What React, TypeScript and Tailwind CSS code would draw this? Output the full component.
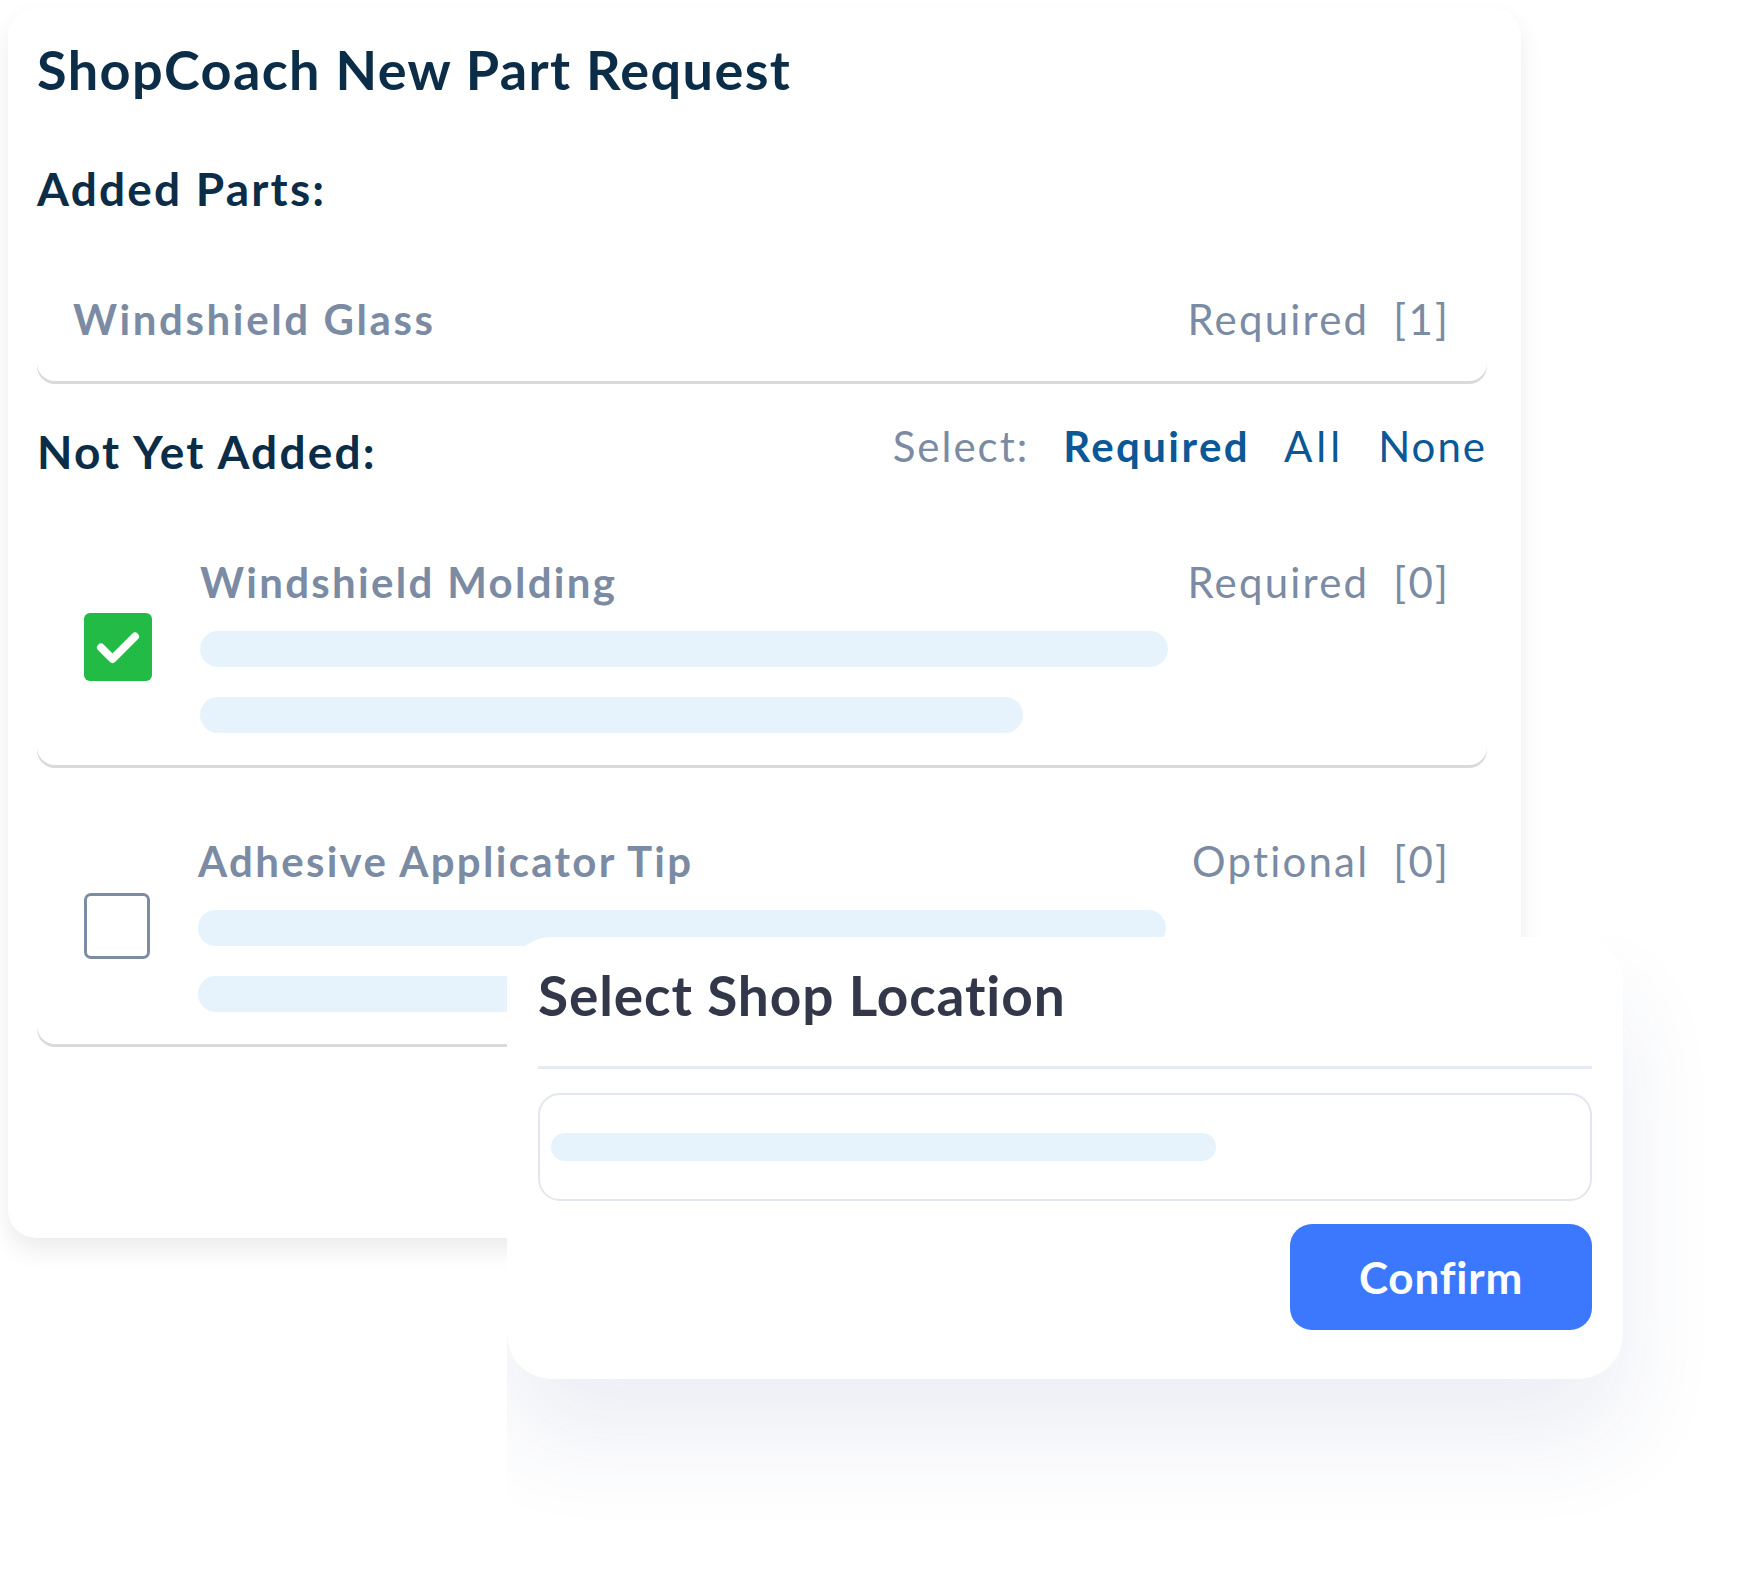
function CheckedBox() {
  return (
    <span className="flex h-[68px] w-[68px] shrink-0 items-center justify-center rounded-[6px] bg-[#22bb46]">
      <svg width="68" height="68" viewBox="0 0 68 68" fill="none">
        <path
          d="M17 34.5 L28.5 46 L51 23.5"
          stroke="white"
          strokeWidth="8"
          strokeLinecap="round"
          strokeLinejoin="round"
        />
      </svg>
    </span>
  );
}

function EmptyBox() {
  return (
    <span className="block h-[66px] w-[66px] shrink-0 rounded-[7px] border-[3px] border-[#7d8ca3] bg-white" />
  );
}

function PartRow({
  name,
  status,
  count,
  checked,
}: {
  name: string;
  status: string;
  count: number;
  checked: boolean;
}) {
  return (
    <div className="flex items-center gap-[48px] rounded-[18px] bg-white pl-[47px] pr-[37px] pt-[39px] pb-[32px] shadow-[0_3px_0_0_#dadada]">
      {checked ? <CheckedBox /> : <EmptyBox />}
      <div className="flex-1">
        <div className="flex items-start justify-between">
          <span className="text-[42px] font-bold leading-none tracking-[2.3px] text-[#7b8ba4]">
            {name}
          </span>
          <span className="flex gap-[24px] text-[42px] leading-none tracking-[2.2px] text-[#7b8ba4]">
            <span>{status}</span>
            <span>[{count}]</span>
          </span>
        </div>
        <div className="mt-[28px] h-[36px] w-[968px] rounded-full bg-[#e6f3fd]" />
        <div className="mt-[30px] h-[36px] w-[823px] rounded-full bg-[#e6f3fd]" />
      </div>
    </div>
  );
}

function LocationModal() {
  return (
    <div className="absolute left-[507px] top-[937px] right-0 bottom-0 overflow-hidden rounded-tl-[45px] bg-white">
      <div className="w-[1116px] rounded-[45px] bg-white px-[31px] pt-[31px] pb-[49px] shadow-[0_60px_100px_rgba(40,70,130,0.09)]">
        <h2 className="text-[55px] font-bold leading-none tracking-[0.9px] text-[#323849]">
          Select Shop Location
        </h2>
        <div className="mt-[43px] h-[3px] bg-[#e6ebf3]" />
        <div className="mt-[24px] flex h-[108px] items-center rounded-[22px] border-2 border-[#e2e6ee] pl-[11px]">
          <div className="h-[28px] w-[665px] rounded-full bg-[#e6f3fd]" />
        </div>
        <div className="mt-[23px] flex justify-end">
          <button className="flex h-[106px] w-[302px] items-center justify-center rounded-[22px] bg-[#3c78fd] text-[44px] font-bold leading-none tracking-[0.8px] text-white">
            Confirm
          </button>
        </div>
      </div>
    </div>
  );
}

export default function App() {
  return (
    <div className="relative h-[1590px] w-[1755px] overflow-hidden bg-white font-['Lato',sans-serif]">
      <div className="ml-[8px] mt-[8px] h-[1230px] w-[1513px] rounded-[28px] bg-white pl-[29px] pr-[34px] pt-[35px] shadow-[0_12px_24px_rgba(0,0,0,0.08)]">
        <h1 className="text-[54px] font-bold leading-none tracking-[1.4px] text-[#0c2d48]">
          ShopCoach New Part Request
        </h1>

        <h3 className="mt-[69px] text-[46px] font-bold leading-none tracking-[2.2px] text-[#0c2d48]">
          Added Parts:
        </h3>

        <div className="mt-[43px] flex items-start justify-between rounded-[18px] bg-white pl-[36px] pr-[37px] pt-[43px] pb-[41px] shadow-[0_3px_0_0_#dadada]">
          <span className="text-[42px] font-bold leading-none tracking-[2.6px] text-[#7b8ba4]">
            Windshield Glass
          </span>
          <span className="flex gap-[24px] text-[42px] leading-none tracking-[2.2px] text-[#7b8ba4]">
            <span>Required</span>
            <span>[1]</span>
          </span>
        </div>

        <div className="mt-[42px] flex items-start justify-between">
          <h3 className="pt-[6px] text-[46px] font-bold leading-none tracking-[2.2px] text-[#0c2d48]">
            Not Yet Added:
          </h3>
          <div className="flex gap-[34px] pt-[2px] text-[42px] leading-none tracking-[2px]">
            <span className="text-[#7b8ba4]">Select:</span>
            <span className="font-bold tracking-[2.4px] text-[#0a5896]">Required</span>
            <span className="tracking-[4px] text-[#0a5896]">All</span>
            <span className="text-[#0a5896]">None</span>
          </div>
        </div>

        <div className="mt-[47px]">
          <PartRow name="Windshield Molding" status="Required" count={0} checked />
        </div>
        <div className="mt-[36px]">
          <PartRow name="Adhesive Applicator Tip" status="Optional" count={0} checked={false} />
        </div>
      </div>

      <LocationModal />
    </div>
  );
}
